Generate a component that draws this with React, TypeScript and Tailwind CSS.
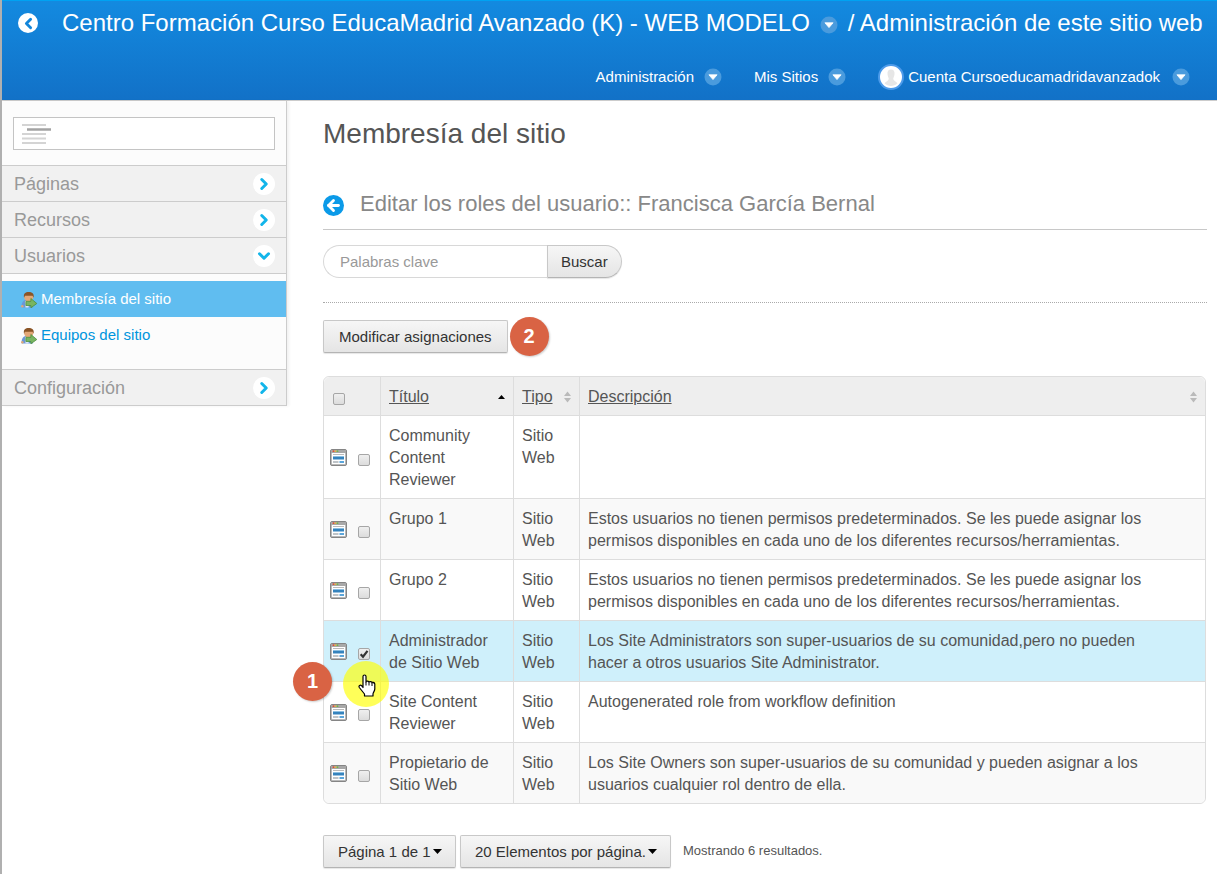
import { useState } from 'react';
import { ArrowLeft, ChevronDown, ChevronLeft, ChevronRight } from 'lucide-react';

const roles = [
  { title: 'Community Content Reviewer', type: 'Sitio Web', description: '' },
  {
    title: 'Grupo 1',
    type: 'Sitio Web',
    description:
      'Estos usuarios no tienen permisos predeterminados. Se les puede asignar los permisos disponibles en cada uno de los diferentes recursos/herramientas.',
  },
  {
    title: 'Grupo 2',
    type: 'Sitio Web',
    description:
      'Estos usuarios no tienen permisos predeterminados. Se les puede asignar los permisos disponibles en cada uno de los diferentes recursos/herramientas.',
  },
  {
    title: 'Administrador de Sitio Web',
    type: 'Sitio Web',
    description:
      'Los Site Administrators son super-usuarios de su comunidad,pero no pueden hacer a otros usuarios Site Administrator.',
  },
  { title: 'Site Content Reviewer', type: 'Sitio Web', description: 'Autogenerated role from workflow definition' },
  {
    title: 'Propietario de Sitio Web',
    type: 'Sitio Web',
    description:
      'Los Site Owners son super-usuarios de su comunidad y pueden asignar a los usuarios cualquier rol dentro de ella.',
  },
];

const buttonStyle =
  'border border-[#c8c8c8] border-b-[#b4b4b4] bg-linear-to-b from-[#f6f6f6] to-[#e5e5e5] text-[#333] shadow-[0_1px_1px_rgba(0,0,0,0.1)]';

function CaretBadge() {
  return (
    <svg className="size-[18px] shrink-0" viewBox="0 0 18 18" aria-hidden="true">
      <circle cx="9" cy="9" r="8.5" fill="#4a9bdd" />
      <path d="M4.900 6.800h8.200L9 11.600z" fill="#fff" stroke="#fff" strokeWidth="0.8" strokeLinejoin="round" />
    </svg>
  );
}

function UserIcon() {
  return (
    <svg className="mt-0.5 size-4 shrink-0" viewBox="0 0 16 16" aria-hidden="true">
      <path d="M0.8 15.500c-.6-4 .8-7 4.200-7.500h5L12 15.500z" fill="#6a97d8" />
      <path d="M4 9h4.500l-1 6.500H4.500z" fill="#dbe8f8" />
      <circle cx="1.300" cy="14.300" r="1.200" fill="#e0a878" />
      <ellipse cx="7.700" cy="5.200" rx="4.500" ry="4.300" fill="#e3a878" />
      <path d="M3 5.800C2.200 1.500 4.500 0 7.700 0s5.800 1.500 4.900 5.800L11.500 3.800H4z" fill="#8a5426" />
      <path d="M4.900 9.300h5V6.500l5.900 5-5.900 4.300v-2.300h-5z" fill="#78b562" stroke="#4d8f3c" strokeWidth="0.8" strokeLinejoin="round" />
    </svg>
  );
}

function RoleIcon() {
  return (
    <svg className="size-[17px] shrink-0" viewBox="0 0 17 17" aria-hidden="true">
      <rect x="0.500" y="0.500" width="16" height="16" rx="1.500" fill="#b9b9b9" stroke="#858585" />
      <path d="M1 1h15v3H1z" fill="#a8a8a8" />
      <circle cx="3.500" cy="2.200" r="0.900" fill="#e34b35" />
      <circle cx="5.500" cy="2.200" r="0.900" fill="#e8b03a" />
      <circle cx="7.500" cy="2.200" r="0.900" fill="#6fb54a" />
      <rect x="2" y="4" width="13" height="11" fill="#fff" />
      <path d="M3 5.500h11" stroke="#bbb" />
      <path d="M3 7h11v1H3z" fill="#8bbfe2" />
      <path d="M3 8h11v2.500H3z" fill="#3583bd" />
      <path d="M3 12h5.500v2H3z" fill="#bfc4c8" />
      <path d="M9.500 12H14v2H9.500z" fill="#5aa5da" />
    </svg>
  );
}

function SortArrows() {
  return (
    <svg className="h-3 w-[7px]" viewBox="0 0 7 12" aria-hidden="true">
      <path d="M3.500 0.500L7 5H0zM3.500 11.500L7 7H0z" fill="#bababa" />
    </svg>
  );
}

function Caret() {
  return (
    <svg className="pointer-events-none absolute right-3.5 h-[5px] w-[9px]" viewBox="0 0 9 5" aria-hidden="true">
      <path d="M0 0h9L4.500 5z" fill="#000" />
    </svg>
  );
}

function Checkbox({ label, checked, onChange }: { label: string; checked: boolean; onChange: () => void }) {
  return (
    <span className="relative flex size-3 shrink-0">
      <input
        type="checkbox"
        aria-label={label}
        checked={checked}
        onChange={onChange}
        className="size-3 appearance-none rounded-xs border border-[#a6a6a6] bg-linear-to-b from-[#efefef] to-[#dcdcdc]"
      />
      {checked && (
        <svg className="pointer-events-none absolute inset-0 size-3" viewBox="0 0 12 12" aria-hidden="true">
          <path d="M2.700 6.200L5 8.700L9.500 2.800" fill="none" stroke="#333" strokeWidth="2.200" />
        </svg>
      )}
    </span>
  );
}

function StepBadge({ step }: { step: string }) {
  return (
    <span className="flex size-[39px] items-center justify-center rounded-full bg-[#d96344] pb-0.5 text-xl font-bold text-white shadow-[1px_1px_2px_rgba(0,0,0,0.2)]">
      {step}
    </span>
  );
}

function SectionButton({ label, open }: { label: string; open?: boolean }) {
  return (
    <button
      type="button"
      aria-expanded={!!open}
      className="flex h-[37px] w-full items-center justify-between border-y border-[#ccc] bg-[#f1f1f1] pr-[11px] pl-3 text-lg text-[#999]"
    >
      {label}
      <span className="flex size-[22px] items-center justify-center rounded-full bg-white text-[#12b5ea]">
        {open ? <ChevronDown size={18} strokeWidth={4} /> : <ChevronRight size={18} strokeWidth={4} />}
      </span>
    </button>
  );
}

function Header() {
  return (
    <header className="h-[101px] border-t border-b border-t-[#00a2f2] border-b-[#ccc] bg-linear-to-b from-[#138ae0] to-[#1271c7] text-white">
      <div className="flex items-center pt-1.5 pl-4 whitespace-nowrap">
        <a href="#volver" aria-label="Volver" className="mr-6 flex size-5 items-center justify-center rounded-full bg-white text-[#1285da]">
          <ChevronLeft size={17} strokeWidth={4} />
        </a>
        <h1 className="flex items-center text-2xl leading-8">
          <a href="#sitio" className="mr-2.5">Centro Formación Curso EducaMadrid Avanzado (K) - WEB MODELO</a>
          <span className="pt-1">
            <CaretBadge />
          </span>
          <span className="ml-2.5">/ Administración de este sitio web</span>
        </h1>
      </div>
      <nav className="flex items-center justify-end pt-[25px] pr-[27px] text-[15px]">
        <button type="button" className="mr-8 flex items-center gap-2.5">
          Administración
          <CaretBadge />
        </button>
        <button type="button" className="mr-8 flex items-center gap-2.5">
          Mis Sitios
          <CaretBadge />
        </button>
        <button type="button" className="flex items-center gap-3">
          <span className="flex items-center gap-1">
            <svg className="size-[26px]" viewBox="0 0 26 26" aria-hidden="true">
              <circle cx="13" cy="13" r="12" fill="#fff" stroke="#4d9bea" strokeWidth="2" />
              <path d="M13 5.500c-2.700 0-3.800 2-3.500 4.700.2 2 1 3 1.300 4.500-.2 2-2.500 2.500-4.300 4.500 3.700 3.700 9.300 3.700 13 0-1.800-2-4.100-2.500-4.300-4.500.3-1.500 1.100-2.500 1.300-4.500.3-2.700-.8-4.700-3.500-4.700z" fill="#e6e6e6" />
            </svg>
            Cuenta Cursoeducamadridavanzadok
          </span>
          <CaretBadge />
        </button>
      </nav>
    </header>
  );
}

function Sidebar() {
  return (
    <aside className="w-[285px] shrink-0 self-start border-r border-[#ccc] bg-[#fcfcfc] shadow-[2px_0_3px_rgba(0,0,0,0.06)]">
      <div className="relative px-[11px] pt-4 pb-[15px]">
        <input type="text" aria-label="Buscar en el menú" className="block h-[33px] w-full border border-[#c4c4c4] bg-white pl-11" />
        <svg className="pointer-events-none absolute top-[22px] left-5 h-[22px] w-[30px]" viewBox="0 0 30 22" aria-hidden="true">
          <path d="M0 2h24M0 11h24M0 15.500h24M0 20h24" stroke="#d4d4d4" strokeWidth="2" />
          <path d="M5 6.500h24" stroke="#a3a3a3" strokeWidth="2.500" />
        </svg>
      </div>
      <nav className="flex flex-col -space-y-px">
        <SectionButton label="Páginas" />
        <SectionButton label="Recursos" />
        <SectionButton label="Usuarios" open />
        <ul className="pt-2 pb-[17px] text-[15px]">
          <li>
            <a href="#membresia" className="flex h-9 items-center gap-1 bg-[#60bdf0] pl-[19px] text-white">
              <UserIcon />
              Membresía del sitio
            </a>
          </li>
          <li>
            <a href="#equipos" className="flex h-9 items-center gap-1 pl-[19px] text-[#0095dd]">
              <UserIcon />
              Equipos del sitio
            </a>
          </li>
        </ul>
        <SectionButton label="Configuración" />
      </nav>
    </aside>
  );
}

function Pointer() {
  return (
    <>
      <span className="pointer-events-none absolute top-10 left-[19px] z-10 size-[46px] rounded-full bg-[#ffff00]/65" />
      <svg className="pointer-events-none absolute top-[53px] left-[34px] z-10 h-[23px] w-[18px]" viewBox="0 0 18 23" aria-hidden="true">
        <path
          d="M5 13.500V2.500C5 0.500 8 0.500 8 2.500V8c0-1.200 3-1.200 3 .3 0-1 3-1 3 .5 0-.8 2.800-.6 2.800 1.200v5c0 2-1.800 3.500-1.800 5V22H6.500v-2L1.300 13.500c-1-1.500 1-3 2.300-1.800z"
          fill="#fff"
          stroke="#000"
          strokeWidth="1.200"
          strokeLinejoin="round"
        />
        <path d="M8 8v3.500M11 8.500v3M14 9v3" stroke="#000" strokeWidth="1" />
      </svg>
    </>
  );
}

function RolesTable() {
  const [selected, setSelected] = useState<number[]>([3]);

  const toggle = (index: number) =>
    setSelected(selected.includes(index) ? selected.filter((i) => i !== index) : [...selected, index]);

  const toggleAll = () => setSelected(selected.length === roles.length ? [] : roles.map((_, i) => i));

  return (
    <div className="mr-px rounded-md border border-[#ddd]">
      <table className="w-full table-fixed border-separate border-spacing-0 text-left">
        <thead>
          <tr className="bg-[#eee]">
            <th className="w-14 rounded-tl-md pt-1.5 pl-[9px]">
              <Checkbox label="Seleccionar todo" checked={selected.length === roles.length} onChange={toggleAll} />
            </th>
            <th className="w-[133px] border-l border-[#ddd] px-2 pt-[9px] pb-[7px] font-normal">
              <div className="flex items-center justify-between">
                <a href="#titulo" className="underline">Título</a>
                <svg className="h-1 w-[7px]" viewBox="0 0 7 4" aria-hidden="true">
                  <path d="M0 4h7L3.500 0z" fill="#000" />
                </svg>
              </div>
            </th>
            <th className="w-[66px] border-l border-[#ddd] px-2 pt-[9px] pb-[7px] font-normal">
              <div className="flex items-center justify-between">
                <a href="#tipo" className="underline">Tipo</a>
                <SortArrows />
              </div>
            </th>
            <th className="rounded-tr-md border-l border-[#ddd] px-2 pt-[9px] pb-[7px] font-normal">
              <div className="flex items-center justify-between">
                <a href="#descripcion" className="underline">Descripción</a>
                <SortArrows />
              </div>
            </th>
          </tr>
        </thead>
        <tbody>
          {roles.map((role, index) => (
            <tr
              key={role.title}
              className={`align-top ${selected.includes(index) ? 'bg-[#cff0fb]' : index % 2 ? 'bg-[#f9f9f9]' : 'bg-white'}`}
            >
              <td className={`relative border-t border-[#ddd] pl-1.5 align-middle ${index === roles.length - 1 ? 'rounded-bl-md' : ''}`}>
                <div className="flex items-center gap-[11px] pt-px">
                  <RoleIcon />
                  <span className="pt-1">
                    <Checkbox label={role.title} checked={selected.includes(index)} onChange={() => toggle(index)} />
                  </span>
                </div>
                {index === 3 && (
                  <>
                    <span className="absolute top-[41px] -left-[31px] z-10">
                      <StepBadge step="1" />
                    </span>
                    <Pointer />
                  </>
                )}
              </td>
              <td className="border-t border-l border-[#ddd] px-2 pt-[9px] pb-[7px]">{role.title}</td>
              <td className="border-t border-l border-[#ddd] px-2 pt-[9px] pb-[7px]">{role.type}</td>
              <td className={`border-t border-l border-[#ddd] pt-[9px] pr-7 pb-[7px] pl-2 ${index === roles.length - 1 ? 'rounded-br-md' : ''}`}>
                {role.description}
              </td>
            </tr>
          ))}
        </tbody>
      </table>
    </div>
  );
}

export default function App() {
  return (
    <div className="min-h-screen border-l-2 border-[#b0b0b0] bg-white font-['Liberation_Sans',Arial,sans-serif] text-base leading-[22px] text-[#555]">
      <Header />
      <div className="flex items-start">
        <Sidebar />
        <main className="min-w-0 flex-1 pt-[15px] pr-2.5 pl-9">
          <h2 className="text-[28px] leading-9">Membresía del sitio</h2>

          <div className="mt-8 flex h-[46px] items-start border-b border-[#c8c8c8]">
            <a href="#atras" aria-label="Atrás" className="mt-[11px] mr-4 flex size-[21px] items-center justify-center rounded-full bg-[#0b9ae8] text-white">
              <ArrowLeft size={17} strokeWidth={4} />
            </a>
            <h3 className="pt-1 text-[22px] leading-8 text-[#888]">Editar los roles del usuario:: Francisca García Bernal</h3>
          </div>

          <form className="mt-[15px] flex" onSubmit={(e) => e.preventDefault()}>
            <input
              type="text"
              aria-label="Palabras clave"
              placeholder="Palabras clave"
              className="h-[33px] w-[224px] rounded-l-full border border-r-0 border-[#d8d8d8] px-4 text-[15px] placeholder:text-[#999]"
            />
            <button type="submit" className={`h-[33px] rounded-r-full px-[13px] text-[15px] ${buttonStyle}`}>
              Buscar
            </button>
          </form>

          <div className="mt-6 border-t border-dotted border-[#aaa]" />

          <div className="mt-3.5 mb-5 flex items-center gap-0.5">
            <button type="button" className={`h-[33px] rounded-xs px-[15px] text-[15px] ${buttonStyle}`}>
              Modificar asignaciones
            </button>
            <StepBadge step="2" />
          </div>

          <RolesTable />

          <div className="mt-[31px] flex items-center gap-1 pb-1.5">
            <span className="relative flex items-center">
              <select aria-label="Página" className={`h-[33px] appearance-none rounded-xs pr-6 pl-3.5 text-[15px] ${buttonStyle}`}>
                <option>Página 1 de 1</option>
              </select>
              <Caret />
            </span>
            <span className="relative flex items-center">
              <select aria-label="Elementos por página" className={`h-[33px] appearance-none rounded-xs pr-6 pl-3.5 text-[15px] ${buttonStyle}`}>
                <option>20 Elementos por página.</option>
              </select>
              <Caret />
            </span>
            <span className="ml-2 pb-0.5 text-[13px]">Mostrando 6 resultados.</span>
          </div>
        </main>
      </div>
    </div>
  );
}
